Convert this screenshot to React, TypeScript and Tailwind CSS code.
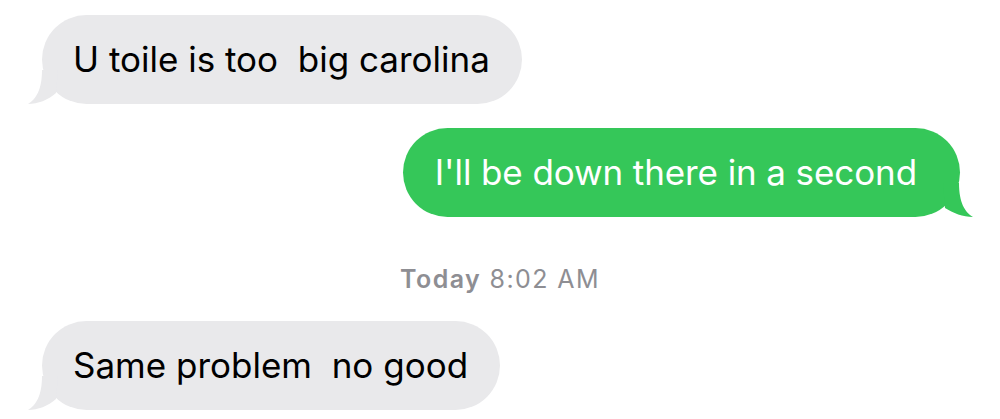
function LeftTail({ color }: { color: string }) {
  return (
    <svg className="absolute bottom-0 left-[-14px]" width="40" height="40" viewBox="0 0 40 40">
      <path d="M14 6 C14 26 8 35 0 40 C10 40 20 36 28 29 L30 6 Z" fill={color} />
    </svg>
  );
}

function RightTail({ color }: { color: string }) {
  return (
    <svg className="absolute bottom-0 right-[-13px]" width="40" height="40" viewBox="0 0 40 40">
      <path d="M26 6 C26 26 32 35 40 40 C30 40 20 36 12 31 L10 6 Z" fill={color} />
    </svg>
  );
}

function Received({ text, className }: { text: string; className?: string }) {
  return (
    <div className={`relative flex h-[89px] items-center self-start rounded-full bg-[#e9e9eb] pl-[31px] pr-[32px] ${className ?? ""}`}>
      <LeftTail color="#e9e9eb" />
      <span className="relative whitespace-pre text-[35px] text-black">{text}</span>
    </div>
  );
}

export default function App() {
  return (
    <div className="flex h-[419px] w-[1000px] flex-col overflow-hidden bg-white pt-[15px] font-['Inter',sans-serif]">
      <Received text="U toile is too  big carolina" className="ml-[42px]" />

      <div className="relative mr-[40px] mt-[24px] flex h-[89px] items-center self-end rounded-full bg-[#35c759] pl-[32px] pr-[43px]">
        <RightTail color="#35c759" />
        <span className="relative whitespace-pre text-[35px] tracking-[-0.1px] text-white">I'll be down there in a second</span>
      </div>

      <p className="mt-[48px] h-[29px] text-center text-[25px] leading-[29px] tracking-[1.4px] text-[#8e8e93]">
        <span className="font-semibold">Today</span> 8:02 AM
      </p>

      <Received text="Same problem  no good" className="mt-[27px] ml-[42px]" />
    </div>
  );
}
